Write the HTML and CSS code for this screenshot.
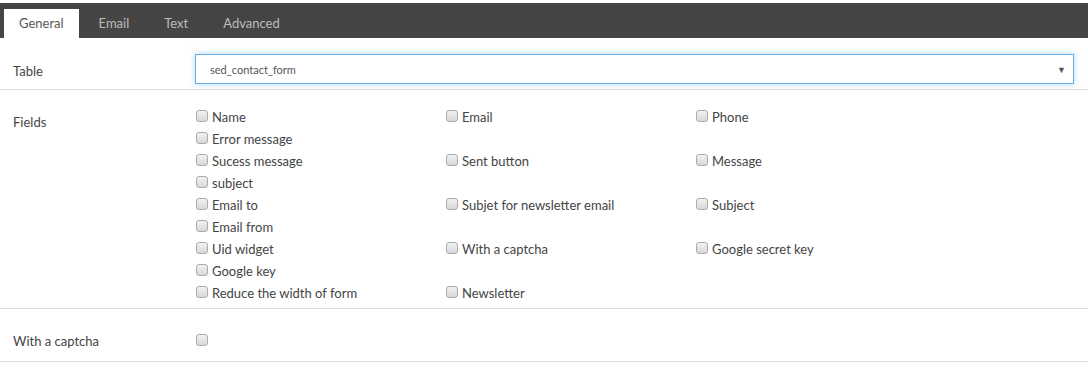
FILE: index.html
```html
<!DOCTYPE html>
<html>

<head>
    <title>Contact form settings</title>
    <link rel="stylesheet" href="styles.css">
</head>

<body>
    <div class="tabs">
        <a class="tab active">General</a>
        <a class="tab">Email</a>
        <a class="tab">Text</a>
        <a class="tab">Advanced</a>
    </div>

    <div class="row row-table">
        <label class="label">Table</label>
        <div class="control">
            <div class="select">
                <span>sed_contact_form</span>
                <span class="caret">&#9660;</span>
            </div>
        </div>
    </div>

    <div class="row row-fields">
        <label class="label">Fields</label>
        <div class="control fields">
            <label class="check"><span class="box"></span>Name</label>
            <label class="check"><span class="box"></span>Email</label>
            <label class="check"><span class="box"></span>Phone</label>
            <label class="check solo"><span class="box"></span>Error message</label>
            <label class="check"><span class="box"></span>Sucess message</label>
            <label class="check"><span class="box"></span>Sent button</label>
            <label class="check"><span class="box"></span>Message</label>
            <label class="check solo"><span class="box"></span>subject</label>
            <label class="check"><span class="box"></span>Email to</label>
            <label class="check"><span class="box"></span>Subjet for newsletter email</label>
            <label class="check"><span class="box"></span>Subject</label>
            <label class="check solo"><span class="box"></span>Email from</label>
            <label class="check"><span class="box"></span>Uid widget</label>
            <label class="check"><span class="box"></span>With a captcha</label>
            <label class="check"><span class="box"></span>Google secret key</label>
            <label class="check solo"><span class="box"></span>Google key</label>
            <label class="check"><span class="box"></span>Reduce the width of form</label>
            <label class="check"><span class="box"></span>Newsletter</label>
        </div>
    </div>

    <div class="row row-captcha">
        <label class="label">With a captcha</label>
        <div class="control">
            <span class="box"></span>
        </div>
    </div>
</body>

</html>
```

FILE: styles.css
```css
* {
    margin: 0;
    box-sizing: border-box;
}

body {
    background-color: #fff;
    font-family: Lato, "Open Sans", sans-serif;
    font-size: 13px;
    color: #444;
    padding-top: 3px;
}

.tabs {
    background-color: #454545;
    height: 35px;
    display: flex;
    align-items: flex-end;
    gap: 4px;
    padding-left: 4px;
}

.tab {
    height: 29px;
    line-height: 29px;
    padding: 0 15px;
    color: #bcbcbc;
}

.tab.active {
    background-color: #fff;
    color: #555;
    padding: 0 15px 0 15px;
}

.tab + .tab {
    padding-left: 16px;
}

.row {
    display: flex;
    align-items: flex-start;
    border-bottom: 1px solid #ddd;
    padding: 0 14px 0 13px;
}

.label {
    width: 182px;
    flex-shrink: 0;
    line-height: 18px;
}

.control {
    flex: 1;
}

.row-table {
    height: 52px;
    padding-top: 16px;
}

.row-table .label {
    padding-top: 8px;
}

.select {
    height: 30px;
    border: 1px solid #66afe9;
    box-shadow: 0 0 6px rgba(102, 175, 233, 0.5);
    display: flex;
    align-items: center;
    justify-content: space-between;
    padding: 0 7px 0 14px;
    font-size: 11px;
    color: #555;
}

.caret {
    font-size: 9px;
    color: #555;
}

.row-fields {
    padding-top: 16px;
    padding-bottom: 4px;
}

.row-fields .label {
    padding-top: 7px;
}

.fields {
    display: grid;
    grid-template-columns: 250px 250px 250px;
    grid-auto-rows: 22px;
}

.check {
    display: flex;
    align-items: center;
    padding-left: 1px;
}

.check .box {
    margin-right: 4px;
    margin-top: -2px;
}

.solo {
    grid-column: 1 / span 3;
}

.box {
    display: inline-block;
    width: 12px;
    height: 12px;
    border: 1px solid #aaa;
    border-radius: 3px;
    background: linear-gradient(#f2f2f2, #d8d8d8);
}

.row-captcha {
    height: 53px;
    padding-top: 23px;
}

.row-captcha .control {
    padding-left: 1px;
    padding-top: 2px;
    display: flex;
}
```
